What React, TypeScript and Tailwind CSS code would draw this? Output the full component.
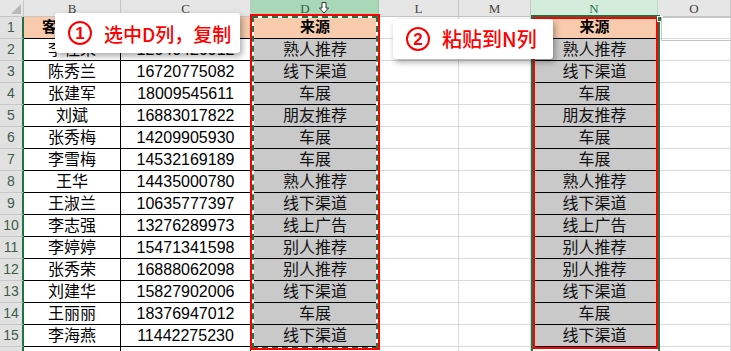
import React from 'react';

type Row = { name: string; phone: string; src: string };

const data: Row[] = [
  { name: '李桂荣', phone: '12640426912', src: '熟人推荐' },
  { name: '陈秀兰', phone: '16720775082', src: '线下渠道' },
  { name: '张建军', phone: '18009545611', src: '车展' },
  { name: '刘斌', phone: '16883017822', src: '朋友推荐' },
  { name: '张秀梅', phone: '14209905930', src: '车展' },
  { name: '李雪梅', phone: '14532169189', src: '车展' },
  { name: '王华', phone: '14435000780', src: '熟人推荐' },
  { name: '王淑兰', phone: '10635777397', src: '线下渠道' },
  { name: '李志强', phone: '13276289973', src: '线上广告' },
  { name: '李婷婷', phone: '15471341598', src: '别人推荐' },
  { name: '张秀荣', phone: '16888062098', src: '别人推荐' },
  { name: '刘建华', phone: '15827902006', src: '线下渠道' },
  { name: '王丽丽', phone: '18376947012', src: '车展' },
  { name: '李海燕', phone: '11442275230', src: '线下渠道' },
];

const cellFont = "font-['Liberation_Sans','Noto_Sans_CJK_SC',sans-serif]";

function HeaderCell({ letter, className, children }: { letter: string; className: string; children?: React.ReactNode }) {
  return (
    <div
      className={`h-[17px] flex items-center justify-center border-b border-r font-['Liberation_Serif',serif] text-[13px] leading-none ${className}`}
    >
      {letter}
      {children}
    </div>
  );
}

// column with the customer table (B, C)
function TableCol({ width, head, values }: { width: string; head: string; values: string[] }) {
  return (
    <div className={`flex flex-col ${width}`}>
      <div className={`h-[22px] bg-[#f8cbad] border-b border-r border-black flex items-center justify-center text-[15px] font-bold text-black whitespace-nowrap ${cellFont}`}>
        {head}
      </div>
      {values.map((v, i) => (
        <div
          key={i}
          className={`h-[22px] bg-white border-b border-r border-black flex items-center justify-center text-[16px] text-black whitespace-nowrap ${cellFont}`}
        >
          {v}
        </div>
      ))}
      <div className="h-[22px] border-r border-black bg-white" />
    </div>
  );
}

function SourceCol({ width }: { width: string }) {
  return (
    <div className={`flex flex-col ${width}`}>
      <div className={`h-[22px] bg-[#f8cbad] border-b border-black flex items-center justify-center text-[15px] font-bold text-black ${cellFont}`}>
        来源
      </div>
      {data.map((r, i) => (
        <div
          key={i}
          className={`h-[22px] bg-[#c9c9c9] border-b border-black flex items-center justify-center text-[16px] text-[#111] ${cellFont}`}
        >
          {r.src}
        </div>
      ))}
      <div className="h-[22px] bg-white" />
    </div>
  );
}

function EmptyCol({ width }: { width: string }) {
  return (
    <div className={`flex flex-col ${width}`}>
      {Array.from({ length: 16 }).map((_, i) => (
        <div key={i} className="h-[22px] bg-white border-b border-r border-[#d9d9d9]" />
      ))}
    </div>
  );
}

function Callout({ num, text, className, textSize }: { num: string; text: string; className: string; textSize: string }) {
  return (
    <div
      className={`absolute h-[40px] bg-white rounded-[3px] shadow-[2px_3px_6px_rgba(0,0,0,0.35)] flex items-center gap-[12px] pl-[13px] whitespace-nowrap ${className}`}
    >
      <div className="w-[24px] h-[24px] shrink-0 rounded-full border-2 border-[#ff0000] flex items-center justify-center text-[#ff0000] text-[17px] font-bold font-['Liberation_Sans',sans-serif] leading-none">
        {num}
      </div>
      <span className={`text-[#ff0000] font-medium font-['Noto_Sans_CJK_SC','Liberation_Sans',sans-serif] leading-none ${textSize}`}>
        {text}
      </span>
    </div>
  );
}

export default function App() {
  return (
    <div className="relative w-[731px] h-[351px] overflow-hidden bg-white">
      <div className="flex">
        {/* row numbers */}
        <div className="flex flex-col w-[24px] shrink-0">
          <div className="relative h-[17px] bg-[#e6e6e6] border-b border-r border-[#c6c6c6]">
            <svg className="absolute right-[2px] bottom-[2px]" width="10" height="10" viewBox="0 0 10 10">
              <polygon points="10,0 10,10 0,10" fill="#b9b9b9" />
            </svg>
          </div>
          {Array.from({ length: 16 }).map((_, i) => (
            <div
              key={i}
              className="h-[22px] bg-[#e1e1e1] border-b border-[#c8c8c8] border-r-2 border-r-[#217346] flex items-center justify-center text-[14px] text-[#3d5c4a] font-['Liberation_Sans',sans-serif]"
            >
              {i < 15 ? i + 1 : ''}
            </div>
          ))}
        </div>

        <div className="flex flex-col">
          <HeaderCell letter="B" className="w-[97px] bg-[#e6e6e6] border-[#c6c6c6] text-[#444]" />
          <TableCol width="w-[97px]" head="客户姓名" values={data.map((r) => r.name)} />
        </div>

        <div className="flex flex-col">
          <HeaderCell letter="C" className="w-[130px] bg-[#e6e6e6] border-[#c6c6c6] text-[#444]" />
          <TableCol width="w-[130px]" head="联系电话" values={data.map((r) => r.phone)} />
        </div>

        <div className="flex flex-col">
          <HeaderCell letter="D" className="w-[128px] bg-[#a9d8b8] border-[#9cc5a8] text-[#2f5e40]">
            <svg className="ml-[9px]" width="10" height="12" viewBox="0 0 10 12">
              <path d="M3 0.5h4v5.5h2.5L5 11.2 0.5 6H3z" fill="white" stroke="#333" strokeWidth="1" />
            </svg>
          </HeaderCell>
          <SourceCol width="w-[128px]" />
        </div>

        <div className="flex flex-col">
          <HeaderCell letter="L" className="w-[80px] bg-[#e6e6e6] border-[#c6c6c6] text-[#444]" />
          <EmptyCol width="w-[80px]" />
        </div>

        <div className="flex flex-col">
          <HeaderCell letter="M" className="w-[72px] bg-[#e6e6e6] border-[#c6c6c6] text-[#444]" />
          <EmptyCol width="w-[72px]" />
        </div>

        <div className="flex flex-col">
          <HeaderCell letter="N" className="w-[127px] bg-[#d3ecdb] border-[#bcd9c4] text-[#217346]" />
          <SourceCol width="w-[127px]" />
        </div>

        <div className="flex flex-col">
          <HeaderCell letter="O" className="w-[73px] bg-[#e6e6e6] border-[#c6c6c6] text-[#444]" />
          <EmptyCol width="w-[73px]" />
        </div>
      </div>

      {/* copy marquee on D */}
      <div className="absolute left-[252px] top-[16px] w-[126px] h-[333px] border-2 border-white pointer-events-none" />
      <div className="absolute left-[252px] top-[16px] w-[126px] h-[333px] border-2 border-dashed border-[#217346] pointer-events-none" />
      <div className="absolute left-[250px] top-[14px] w-[130px] h-[336px] border-2 border-[#ff0000] pointer-events-none" />

      {/* selection on N */}
      <div className="absolute left-[531px] top-[15px] w-[129px] h-[340px] border-2 border-[#217346] pointer-events-none" />
      <div className="absolute left-[533px] top-[17px] w-[125px] h-[332px] border-2 border-[#ff0000] pointer-events-none" />
      <div className="absolute left-[657px] top-[16px] w-[6px] h-[6px] bg-[#217346] border border-white" />
      <div className="absolute left-[661px] top-[17px] w-[80px] h-[24px] border border-[#c4c4c4] pointer-events-none" />

      <Callout num="1" text="选中D列，复制" textSize="text-[19px]" className="left-[55px] top-[13px] w-[185px]" />
      <Callout num="2" text="粘贴到N列" textSize="text-[20px]" className="left-[393px] top-[19px] w-[160px]" />
    </div>
  );
}
